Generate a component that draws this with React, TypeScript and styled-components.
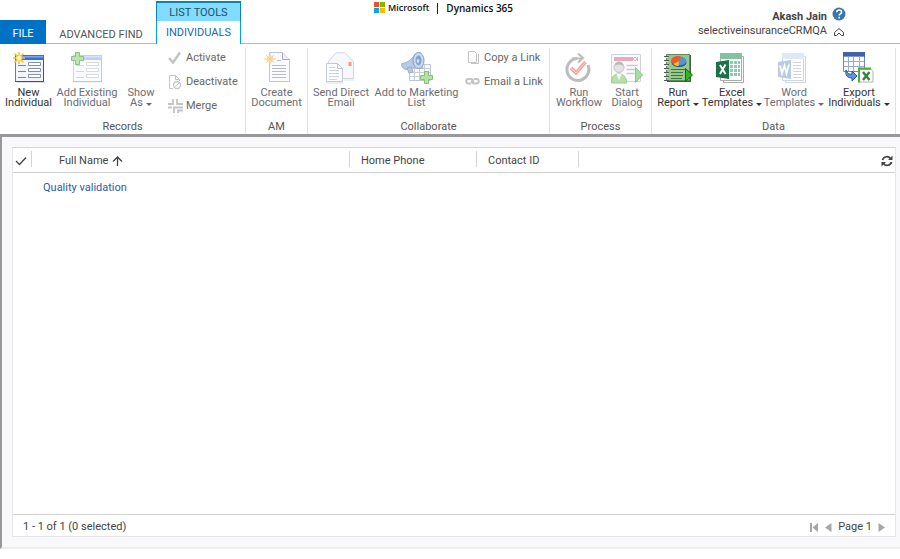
import React from "react";
import styled, { createGlobalStyle } from "styled-components";

const Global = createGlobalStyle`
  * { box-sizing: border-box; }
  body { margin: 0; background: #fff; color: #444; font: 11px/14px Roboto, "Segoe UI", sans-serif; }
  button { font: inherit; color: inherit; background: none; border: 0; padding: 0; cursor: pointer; }
  svg { display: block; flex: none; }
`;

const Page = styled.div`
  display: flex;
  flex-direction: column;
  height: 100vh;
  padding-bottom: 10px;
`;

const Header = styled.header`
  display: grid;
  grid-template-columns: 1fr auto 1fr;
  height: 44px;
  padding-right: 13px;
  border-bottom: 1px solid #b8b8b8;
`;

const Tabs = styled.nav`
  display: flex;
  align-items: flex-end;
  margin-bottom: -1px;
`;

const FileTab = styled.button`
  width: 46px;
  height: 24px;
  padding-top: 4px;
  background: #0072c6;
  color: #fff;
`;

const Tab = styled.button`
  width: 110px;
  height: 20px;
  padding-top: 2px;
  white-space: nowrap;
  color: #555;
`;

const ActiveTab = styled.div`
  width: 85px;
  border: 1px solid #00a2e8;
  border-width: 0 1px;
  background: #fff;
  text-align: center;
`;

const TabCategory = styled.div`
  height: 20px;
  margin: 0 -1px;
  border: 1px solid #0785b5;
  border-width: 2px 1px 0;
  background: #82dcff;
  color: #1c5069;
  line-height: 19px;
  white-space: nowrap;
`;

const ActiveTabButton = styled.button`
  width: 100%;
  height: 23px;
  color: #1668b8;
`;

const Brand = styled.div`
  display: flex;
  align-items: center;
  height: 16px;
  color: #111;
  font-family: "Open Sans", sans-serif;
  font-size: 9px;
  font-weight: 600;
  white-space: nowrap;
`;

const BrandName = styled.span`
  margin-left: 2px;
`;

const BrandBar = styled.span`
  width: 1px;
  height: 11px;
  margin: 0 8px;
  background: #222;
`;

const Product = styled.span`
  font-size: 10px;
`;

const User = styled.div`
  display: grid;
  grid-template-columns: auto 14px;
  justify-content: end;
  align-content: start;
  column-gap: 5px;
  padding: 3px 41px 0 0;
  text-align: right;
`;

const UserName = styled.strong`
  padding-top: 7px;
  color: #444;
`;

const Ribbon = styled.section`
  display: flex;
  padding-top: 4px;
  border-bottom: 3px solid #98989b;
`;

const Group = styled.div`
  display: flex;
  flex-direction: column;
  border-right: 1px solid #e2e2e2;
`;

const GroupItems = styled.div<{ $end?: number }>`
  display: flex;
  height: 70px;
  padding-right: ${(p) => p.$end ?? 0}px;
`;

const GroupTitle = styled.div`
  height: 16px;
  text-align: center;
  line-height: 18px;
  color: #555;
`;

const LargeButton = styled.button<{ $width: number }>`
  display: flex;
  flex-direction: column;
  align-items: center;
  width: ${(p) => p.$width}px;
  padding-top: 4px;
  color: #333;
  line-height: 10px;
  white-space: nowrap;
  &:disabled { color: #6c6c74; cursor: default; }
`;

const IconSlot = styled.span`
  width: 32px;
  height: 32px;
  margin-bottom: 4px;
`;

const Arrow = styled.i`
  display: inline-block;
  margin-left: 3px;
  border: 3px solid transparent;
  border-top-color: currentColor;
  border-bottom: 0;
  vertical-align: 0;
`;

const SmallColumn = styled.div<{ $start: number; $width: number }>`
  display: flex;
  flex-direction: column;
  gap: 6px;
  width: ${(p) => p.$width}px;
  padding-left: ${(p) => p.$start}px;
`;

const SmallButton = styled.button`
  display: flex;
  align-items: center;
  gap: 3px;
  height: 18px;
  padding-top: 2px;
  white-space: nowrap;
  &:disabled { color: #666; cursor: default; }
`;

const Workspace = styled.main`
  display: flex;
  flex: 1;
  min-height: 0;
  padding: 10px 4px 10px 10px;
  border-left: 2px solid #98989b;
  border-bottom: 2px solid #eee;
  background: #f9f9fb;
`;

const Panel = styled.section`
  display: flex;
  flex: 1;
  flex-direction: column;
  border: 1px solid #e6e6e8;
  border-top-color: #d5d5d5;
  background: #fff;
`;

const PanelBody = styled.div`
  flex: 1;
`;

const Grid = styled.table`
  width: 100%;
  table-layout: fixed;
  border-spacing: 0;
`;

const HeadCell = styled.th<{ $width?: number }>`
  width: ${(p) => (p.$width ? `${p.$width}px` : "auto")};
  height: 25px;
  padding: 0 0 2px;
  border-bottom: 1px solid #d0d0d0;
  font-weight: 400;
  text-align: left;
`;

const HeadInner = styled.div<{ $pad: number; $last?: boolean }>`
  display: flex;
  align-items: center;
  gap: 4px;
  justify-content: ${(p) => (p.$last ? "flex-end" : "flex-start")};
  height: 16px;
  padding-top: 4px;
  padding-left: ${(p) => p.$pad}px;
  padding-right: ${(p) => (p.$last ? 2 : 0)}px;
  border-right: ${(p) => (p.$last ? 0 : 1)}px solid #d5d5d5;
`;

const Cell = styled.td`
  height: 28px;
  padding: 2px 0 0 11px;
`;

const RecordLink = styled.a`
  color: #1f5cab;
  text-decoration: none;
`;

const Footer = styled.footer`
  display: flex;
  align-items: center;
  justify-content: space-between;
  height: 22px;
  padding: 3px 10px 0;
  border-top: 1px solid #d0d0d0;
`;

const Pager = styled.div`
  display: flex;
  align-items: center;
  gap: 6px;
`;

const Large = ({ children }: { children: React.ReactNode }) => (
  <svg width="32" height="32" viewBox="0 0 32 32" fill="none" aria-hidden="true">{children}</svg>
);

const Small = ({ children }: { children: React.ReactNode }) => (
  <svg width="16" height="16" viewBox="0 0 16 16" fill="none" aria-hidden="true">{children}</svg>
);

const FormBody = () => (
  <>
    <path d="M4 30.500h28" stroke="#bbb" opacity=".5" />
    <path d="M2.500 5h28v24.500h-28z" fill="#f1f5fb" stroke="#667b96" />
    <path d="M2 3h29v5H2z" fill="#3b6fce" />
    <path d="M3 4h27v1.500H3z" fill="#7fa6ef" />
    <path d="M30.500 8v22M2 29.500h29" stroke="#43566f" />
    <path d="M5 13.500h8M5 19.500h8M5 25.500h8" stroke="#77859a" />
    <path d="M15.500 10.500h12v3h-12zM15.500 16.500h12v3h-12zM15.500 22.500h12v3h-12z" fill="#fff" stroke="#8591a4" />
  </>
);

const NewIcon = () => (
  <Large>
    <FormBody />
    <path d="M6 0v12M0 6h12M1.500 1.500l9 9M10.500 1.500l-9 9" stroke="#eec22c" strokeWidth="1.500" />
    <circle cx="6" cy="6" r="2.500" fill="#fff9b8" stroke="#f9e05a" />
  </Large>
);

const AddExistingIcon = () => (
  <Large>
    <g opacity=".32"><FormBody /></g>
    <path d="M4.500.5h4v4h4v4h-4v4h-4v-4h-4v-4h4z" fill="#bfe3ae" stroke="#8fbd84" />
  </Large>
);

const DocumentIcon = () => (
  <Large>
    <path d="M8.500.5h13l7 7v22h-20z" fill="#fafaff" stroke="#c2c4de" />
    <path d="M21.500.5v7h7" fill="#eef" stroke="#a5a8c9" />
    <path d="M16 8.500h4M11 13.500h14M11 16.500h14M11 19.500h14M11 22.500h14M11 25.500h14" stroke="#b6b8d6" />
    <circle cx="9" cy="7" r="3.500" fill="#fbe3b0" />
    <path d="M9 1v12M3 7h12M5 3l8 8M13 3l-8 8" stroke="#f5cf94" />
  </Large>
);

const MailIcon = () => (
  <Large>
    <path d="M3.500 9.500L11 .7h9l8.500 8.800v17h-25z" fill="#f7f8fb" stroke="#d0d5de" />
    <path d="M23.500 10h3v4h-3z" fill="#f09a82" />
    <path d="M1.500 11.500h11l5 5v13h-16z" fill="#fcfdff" stroke="#bfc9d9" />
    <path d="M12.500 11.500v5h5" stroke="#bfc9d9" />
    <path d="M4 15.500h6M4 18.500h10M4 21.500h10M4 24.500h10M4 27.500h8" stroke="#cdd5e0" />
    <path d="M1 31h17M19 28h10" stroke="#ddd" />
  </Large>
);

const MarketingIcon = () => (
  <Large>
    <path d="M8.500 12.500h21v16h-21z" fill="#fafcff" stroke="#bcc6d5" />
    <path d="M9 16.500h20M9 20.500h20M9 24.500h20M13.500 13v15M18.500 13v15M23.500 13v15" stroke="#c5cddb" />
    <path d="M.7 11.500C7 11 12 6 14 2l5-1.500 3 16c-6-2-10-1-16 1-3 0-6-2-5.300-6z" fill="#b5c9e8" stroke="#a3b7d8" />
    <path d="M6 16l2 5 4-1-2-5z" fill="#bdc7da" stroke="#9caac2" />
    <ellipse cx="17.500" cy="8.500" rx="5.500" ry="8" fill="#c9d9f2" stroke="#809ec9" />
    <ellipse cx="17.500" cy="8.500" rx="3" ry="5" fill="#86a3d3" />
    <ellipse cx="17" cy="9" rx="1.300" ry="2" fill="#d5e2f6" />
    <path d="M23.500 19.500h4v4h4v4h-4v4h-4v-4h-4v-4h4z" fill="#b4e2a0" stroke="#87be7a" />
  </Large>
);

const WorkflowIcon = () => (
  <Large>
    <path d="M14 6.500A11 11 0 1 0 25 13" stroke="#bcbcbc" strokeWidth="3" />
    <path d="M9 6.500h11M15 1.500l5 4.500-5 4.500" stroke="#bcbcbc" strokeWidth="2" />
    <path d="M8 16l5 5 9.500-11" stroke="#f3a79d" strokeWidth="3.500" />
    <path d="M8 16l5 5 9.500-11" stroke="#f9cbc5" />
  </Large>
);

const DialogIcon = () => (
  <Large>
    <path d="M.5 2.500h29v27H.5z" fill="#faf9fc" stroke="#d5cfdc" />
    <path d="M3 5h24v4H3z" fill="#e4acbc" />
    <path d="M22 5l4 4M26 5l-4 4" stroke="#fff" />
    <path d="M15.500 13.500h11M15.500 17.500h11M15.500 21.500h8" stroke="#c7cad4" strokeWidth="1.500" />
    <path d="M.5 31c0-7 3-9 7.500-9s7.500 3 7.500 9z" fill="#b8e0a8" stroke="#a1ca91" />
    <path d="M5.500 22L8 28l2.500-6z" fill="#fff" />
    <circle cx="8" cy="15.500" r="5" fill="#e4e2e2" stroke="#c2c0c0" />
    <path d="M3.500 14c0-6 9-6 9 0-4-2-6-2-9 0z" fill="#bbb" />
    <path d="M24.500 15.500l7 7.500-7 7.500z" fill="#a8dda0" stroke="#8cc884" />
  </Large>
);

const ReportIcon = () => (
  <Large>
    <path d="M5 3h24v27H5z" fill="#3f6340" />
    <path d="M4.500 2.500h23v26h-23z" fill="#98c890" stroke="#5b8b59" />
    <path d="M2 4.500h5M2 8.500h5M2 12.500h5M2 16.500h5M2 20.500h5M2 24.500h5M2 28.500h5" stroke="#555" />
    <path d="M3 5.500h3M3 9.500h3M3 13.500h3M3 17.500h3M3 21.500h3M3 25.500h3" stroke="#ddd" />
    <ellipse cx="17" cy="10.500" rx="7.500" ry="4.500" fill="#214f89" />
    <ellipse cx="17" cy="9" rx="7.500" ry="4.500" fill="#5495ce" />
    <path d="M17 9l2-4.500C13 3 8 6 9.500 10l2.500 3z" fill="#e85b2b" />
    <path d="M17 9l-5.500 3c1 1.500 2.500 2 5 2z" fill="#f5bd2e" />
    <path d="M9 17.500h14M9 20.500h12M9 23.500h12M9 26.500h11" stroke="#3c783b" />
    <path d="M23.500 16.500l7 6.500-7 6.500z" fill="#30b71e" stroke="#146c10" />
  </Large>
);

type OfficeProps = { main: string; light: string; line: string; letter: "X" | "W"; cells?: boolean };

const OfficeIcon = ({ main, light, line, letter, cells }: OfficeProps) => (
  <Large>
    <path d="M7.500 4.500h20v26h-20z" fill="#fff" stroke={line} />
    <path d="M4.500 1.500h21v27h-21z" fill="#fff" stroke={line} />
    <path d="M4 1h22v6H4z" fill={light} />
    {cells ? (
      <path d="M14 9h3v3h-3zM18 9h3v3h-3zM22 9h2v3h-2zM14 13h3v3h-3zM18 13h3v3h-3zM22 13h2v3h-2zM14 17h3v3h-3zM18 17h3v3h-3zM22 17h2v3h-2zM14 21h3v3h-3zM18 21h3v3h-3zM22 21h2v3h-2z" fill="#92c9ae" />
    ) : (
      <path d="M15 10.500h8M15 13.500h8M15 16.500h8M15 19.500h8M15 22.500h8M15 25.500h8" stroke={line} />
    )}
    <path d="M0 10l13-2v19L0 25z" fill={main} />
    {letter === "X" ? (
      <path d="M4 13l5.500 9M9.500 12.500L4 22" stroke="#fff" strokeWidth="2" />
    ) : (
      <path d="M2 13.500l2 8 2.500-8 2 8 2.500-9" stroke="#fff" strokeWidth="1.800" />
    )}
  </Large>
);

const ExportIcon = () => (
  <Large>
    <path d="M.5.5h21v19H.5z" fill="#fff" stroke="#7186b8" />
    <path d="M0 0h22v5H0z" fill="#4262a7" />
    <path d="M1 4.500h20" stroke="#7d97d0" />
    <path d="M1 9.500h20M1 14.500h20M5.500 5v14M10.500 5v14M16.500 5v14" stroke="#9ba9ce" />
    <path d="M3 18c2 5 4 4 6 4v-3l5 5-5 5v-3c-4 0-7-2-6-8z" fill="#5f92e2" stroke="#2a56a4" />
    <path d="M16.500 17.500h12l1.500 2v10.500H16.500z" fill="#fff" stroke="#aeb5ac" />
    <path d="M28 16.500H16v14" stroke="#4caf3c" strokeWidth="2" />
    <path d="M20 20l6.500 8M26.500 20L20 28" stroke="#37833b" strokeWidth="2.500" />
  </Large>
);

const ActivateIcon = () => <Small><path d="M2 8l4 4.500 7-10" stroke="#c4c4c4" strokeWidth="2.500" /></Small>;
const DeactivateIcon = () => (
  <Small>
    <path d="M6 14.500H2.500v-13h6l4 4V7M8.500 1.500v4h4" stroke="#c4c4c4" />
    <circle cx="10" cy="11" r="3.500" fill="#fff" stroke="#c4c4c4" strokeWidth="1.300" />
    <path d="M7.500 13.500l5-5" stroke="#c4c4c4" />
  </Small>
);
const MergeIcon = () => (
  <Small>
    <path d="M1 6h6M6 1v5M10 1v5h6M1 9.500h4M7 15V9.500h9M11 15v-2.500h5" stroke="#c4c4c4" strokeWidth="1.800" />
  </Small>
);
const CopyIcon = () => <Small><path d="M3.500 1.500h6l2 2v9h-8zM13.500 4v9.500H6" stroke="#c4c4c4" /></Small>;
const LinkIcon = () => (
  <Small>
    <path d="M6 9.500H3.500a2.200 2.200 0 0 1 0-4.500h2.500c2 0 3 2 1.500 3.500M9 5h2.500a2.200 2.200 0 0 1 0 4.500h-2.500c-2 0-3-2-1.500-3.500" stroke="#c4c4c4" strokeWidth="2" />
  </Small>
);

export default function App() {
  return (
    <Page>
      <Global />
      <Header>
        <Tabs>
          <FileTab>FILE</FileTab>
          <Tab>ADVANCED FIND</Tab>
          <ActiveTab>
            <TabCategory>LIST TOOLS</TabCategory>
            <ActiveTabButton>INDIVIDUALS</ActiveTabButton>
          </ActiveTab>
        </Tabs>
        <Brand>
          <svg width="12" height="12" viewBox="0 0 12 12" aria-hidden="true">
            <path d="M0 0h5v5H0z" fill="#f25022" /><path d="M6 0h5v5H6z" fill="#7fba00" />
            <path d="M0 6h5v5H0z" fill="#00a4ef" /><path d="M6 6h5v5H6z" fill="#ffb900" />
          </svg>
          <BrandName>Microsoft</BrandName>
          <BrandBar />
          <Product>Dynamics 365</Product>
        </Brand>
        <User>
          <UserName>Akash Jain</UserName>
          <button aria-label="Help">
            <svg width="14" height="14" viewBox="0 0 14 14" fill="none">
              <circle cx="7" cy="7" r="6.500" fill="#3874ae" />
              <path d="M4.800 5.300c0-3 4.800-3 4.800 0 0 1.700-2.400 1.500-2.400 3.200M7.200 9.800v1.700" stroke="#fff" strokeWidth="1.600" />
            </svg>
          </button>
          <span>selectiveinsuranceCRMQA</span>
          <button aria-label="Collapse ribbon">
            <svg width="14" height="14" viewBox="0 0 14 14" fill="none">
              <path d="M2.500 8.500L7 4.500l4.500 4v3H9.500L7 9l-2.500 2.500h-2z" stroke="#444" />
            </svg>
          </button>
        </User>
      </Header>

      <Ribbon>
        <Group>
          <GroupItems>
            <LargeButton $width={57}><IconSlot><NewIcon /></IconSlot><span>New<br />Individual</span></LargeButton>
            <LargeButton $width={60} disabled><IconSlot><AddExistingIcon /></IconSlot><span>Add Existing<br />Individual</span></LargeButton>
            <LargeButton $width={48} disabled><IconSlot /><span>Show<br />As<Arrow /></span></LargeButton>
            <SmallColumn $start={2} $width={80}>
              <SmallButton disabled><ActivateIcon />Activate</SmallButton>
              <SmallButton disabled><DeactivateIcon />Deactivate</SmallButton>
              <SmallButton disabled><MergeIcon />Merge</SmallButton>
            </SmallColumn>
          </GroupItems>
          <GroupTitle>Records</GroupTitle>
        </Group>
        <Group>
          <GroupItems>
            <LargeButton $width={61} disabled><IconSlot><DocumentIcon /></IconSlot><span>Create<br />Document</span></LargeButton>
          </GroupItems>
          <GroupTitle>AM</GroupTitle>
        </Group>
        <Group>
          <GroupItems>
            <LargeButton $width={66} disabled><IconSlot><MailIcon /></IconSlot><span>Send Direct<br />Email</span></LargeButton>
            <LargeButton $width={85} disabled><IconSlot><MarketingIcon /></IconSlot><span>Add to Marketing<br />List</span></LargeButton>
            <SmallColumn $start={6} $width={90}>
              <SmallButton disabled><CopyIcon />Copy a Link</SmallButton>
              <SmallButton disabled><LinkIcon />Email a Link</SmallButton>
            </SmallColumn>
          </GroupItems>
          <GroupTitle>Collaborate</GroupTitle>
        </Group>
        <Group>
          <GroupItems $end={5}>
            <LargeButton $width={58} disabled><IconSlot><WorkflowIcon /></IconSlot><span>Run<br />Workflow</span></LargeButton>
            <LargeButton $width={38} disabled><IconSlot><DialogIcon /></IconSlot><span>Start<br />Dialog</span></LargeButton>
          </GroupItems>
          <GroupTitle>Process</GroupTitle>
        </Group>
        <Group>
          <GroupItems $end={5}>
            <LargeButton $width={52}><IconSlot><ReportIcon /></IconSlot><span>Run<br />Report<Arrow /></span></LargeButton>
            <LargeButton $width={56}><IconSlot><OfficeIcon main="#1c7145" light="#82c2a1" line="#aaa" letter="X" cells /></IconSlot><span>Excel<br />Templates<Arrow /></span></LargeButton>
            <LargeButton $width={68} disabled><IconSlot><OfficeIcon main="#bac9e5" light="#dfe8f7" line="#d1d4db" letter="W" /></IconSlot><span>Word<br />Templates<Arrow /></span></LargeButton>
            <LargeButton $width={62}><IconSlot><ExportIcon /></IconSlot><span>Export<br />Individuals<Arrow /></span></LargeButton>
          </GroupItems>
          <GroupTitle>Data</GroupTitle>
        </Group>
      </Ribbon>

      <Workspace>
        <Panel>
          <PanelBody>
            <Grid>
              <thead>
                <tr>
                  <HeadCell $width={19}>
                    <HeadInner $pad={2}>
                      <svg width="12" height="12" viewBox="0 0 12 12" fill="none" role="img" aria-label="Select all"><path d="M1 6l3.500 3.500L11 2.500" stroke="#444" strokeWidth="1.300" /></svg>
                    </HeadInner>
                  </HeadCell>
                  <HeadCell $width={318}>
                    <HeadInner $pad={27}>
                      Full Name
                      <svg width="11" height="11" viewBox="0 0 11 11" fill="none" aria-hidden="true"><path d="M5.500 10V1M1 5.500L5.500 1 10 5.500" stroke="#444" strokeWidth="1.300" /></svg>
                    </HeadInner>
                  </HeadCell>
                  <HeadCell $width={127}><HeadInner $pad={11}>Home Phone</HeadInner></HeadCell>
                  <HeadCell $width={102}><HeadInner $pad={11}>Contact ID</HeadInner></HeadCell>
                  <HeadCell>
                    <HeadInner $pad={0} $last>
                      <button aria-label="Refresh">
                        <svg width="12" height="12" viewBox="0 0 12 12" fill="none">
                          <path d="M1.500 5a4.500 4.500 0 0 1 8-1.500M10.500 7a4.500 4.500 0 0 1-8 1.500" stroke="#444" strokeWidth="1.700" />
                          <path d="M11.500.5V5H7zM.5 11.500V7H5z" fill="#444" />
                        </svg>
                      </button>
                    </HeadInner>
                  </HeadCell>
                </tr>
              </thead>
              <tbody>
                <tr>
                  <td />
                  <Cell><RecordLink href="#">Quality validation</RecordLink></Cell>
                  <td /><td /><td />
                </tr>
              </tbody>
            </Grid>
          </PanelBody>
          <Footer>
            <span>1 - 1 of 1 (0 selected)</span>
            <Pager>
              <button aria-label="First page"><svg width="9" height="9" viewBox="0 0 9 9"><path d="M0 0h2v9H0zM8 0v9L2.500 4.500z" fill="#a6a6a6" /></svg></button>
              <button aria-label="Previous page"><svg width="7" height="9" viewBox="0 0 7 9"><path d="M6.500 0v9L0 4.500z" fill="#a6a6a6" /></svg></button>
              <span>Page 1</span>
              <button aria-label="Next page"><svg width="7" height="9" viewBox="0 0 7 9"><path d="M.5 0v9L7 4.500z" fill="#a6a6a6" /></svg></button>
            </Pager>
          </Footer>
        </Panel>
      </Workspace>
    </Page>
  );
}
